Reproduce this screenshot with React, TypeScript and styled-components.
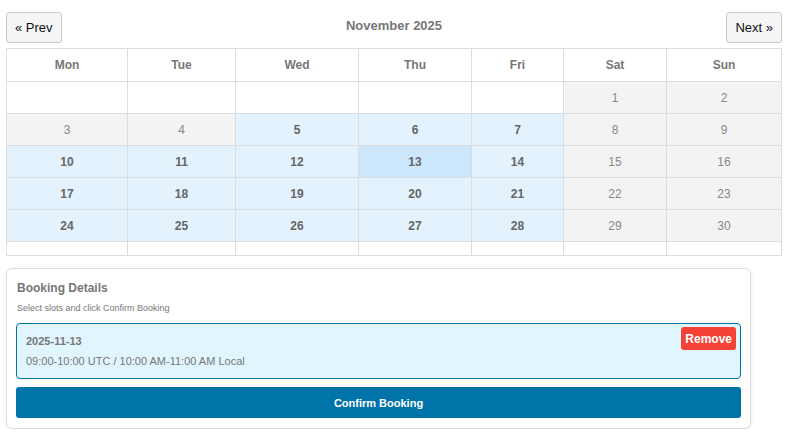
import React from "react";
import styled, { createGlobalStyle } from "styled-components";

const G = createGlobalStyle`
  body { margin: 0; background: #fff; font-family: "Liberation Sans", Arial, sans-serif; }
`;
const Page = styled.div`padding: 12px 10px 0 6px; width: 776px;`;
const Top = styled.div`display: flex; justify-content: space-between; align-items: flex-start; height: 36px;`;
const NavBtn = styled.button`
  height: 31px; padding: 0 8px; font: 13px "Liberation Sans", Arial, sans-serif; color: #111;
  background: #f5f5f5; border: 1px solid #c8c8c8; border-radius: 3px;
`;
const Title = styled.div`font-size: 13px; font-weight: bold; color: #777; margin-top: 6px;`;
const Grid = styled.div`
  display: grid; grid-template-columns: 121px 108px 123px 113px 92px 103px 115px;
  border-top: 1px solid #ddd; border-left: 1px solid #ddd;
`;
const Cell = styled.div<{ $bg: string; $bold: boolean; $h: number; $c: string }>`
  height: ${p => p.$h}px; border-right: 1px solid #ddd; border-bottom: 1px solid #ddd;
  background: ${p => p.$bg}; display: flex; align-items: center; justify-content: center;
  font-size: 12px; font-weight: ${p => (p.$bold ? "bold" : "normal")}; color: ${p => p.$c};
`;
const Card = styled.div`
  margin-top: 12px; width: 725px; border: 1px solid #ddd; border-radius: 6px; padding: 12px 9px 10px;
  box-shadow: 0 1px 4px rgba(0,0,0,0.08);
`;
const H = styled.div`font-size: 12px; font-weight: bold; color: #777; margin-left: 1px;`;
const Sub = styled.div`font-size: 9px; color: #777; margin: 8px 0 10px 1px;`;
const Slot = styled.div`
  position: relative; background: #e0f5fd; border: 1px solid #0074a8; border-radius: 4px;
  padding: 11px 9px 10px; height: 33px;
`;
const SlotDate = styled.div`font-size: 11px; font-weight: bold; color: #777;`;
const SlotTime = styled.div`font-size: 11px; color: #777; margin-top: 8px;`;
const Remove = styled.button`
  position: absolute; top: 3px; right: 4px; background: #f44336; color: #fff; border: none;
  border-radius: 3px; font: bold 12px "Liberation Sans", Arial, sans-serif; height: 23px; padding: 0 4px;
`;
const Confirm = styled.button`
  margin-top: 8px; width: 100%; height: 31px; background: #0073a9; color: #fff; border: none;
  border-radius: 3px; font: bold 11px "Liberation Sans", Arial, sans-serif;
`;

const days = ["Mon", "Tue", "Wed", "Thu", "Fri", "Sat", "Sun"];
const rows: (number | null)[][] = [
  [null, null, null, null, null, 1, 2],
  [3, 4, 5, 6, 7, 8, 9],
  [10, 11, 12, 13, 14, 15, 16],
  [17, 18, 19, 20, 21, 22, 23],
  [24, 25, 26, 27, 28, 29, 30],
];

export default function App() {
  return (
    <Page>
      <G />
      <Top>
        <NavBtn>« Prev</NavBtn>
        <Title>November 2025</Title>
        <NavBtn>Next »</NavBtn>
      </Top>
      <Grid>
        {days.map(d => <Cell key={d} $bg="#fff" $bold $h={32} $c="#777">{d}</Cell>)}
        {rows.flatMap((r, ri) => r.map((n, ci) => {
          const wk = ci >= 5;
          const past = n !== null && n < 5;
          let bg = "#fff";
          if (n !== null) bg = wk || past ? "#f3f3f3" : n === 13 ? "#cce6fb" : "#e4f2fd";
          const bold = n !== null && !wk && !past;
          return <Cell key={ri + "-" + ci} $bg={bg} $bold={bold} $h={ri === 1 ? 31 : 31} $c={bold ? "#666" : "#888"}>{n ?? ""}</Cell>;
        }))}
        {days.map(d => <Cell key={"e" + d} $bg="#fff" $bold={false} $h={13} $c="#888" />)}
      </Grid>
      <Card>
        <H>Booking Details</H>
        <Sub>Select slots and click Confirm Booking</Sub>
        <Slot>
          <SlotDate>2025-11-13</SlotDate>
          <SlotTime>09:00-10:00 UTC / 10:00 AM-11:00 AM Local</SlotTime>
          <Remove>Remove</Remove>
        </Slot>
        <Confirm>Confirm Booking</Confirm>
      </Card>
    </Page>
  );
}
